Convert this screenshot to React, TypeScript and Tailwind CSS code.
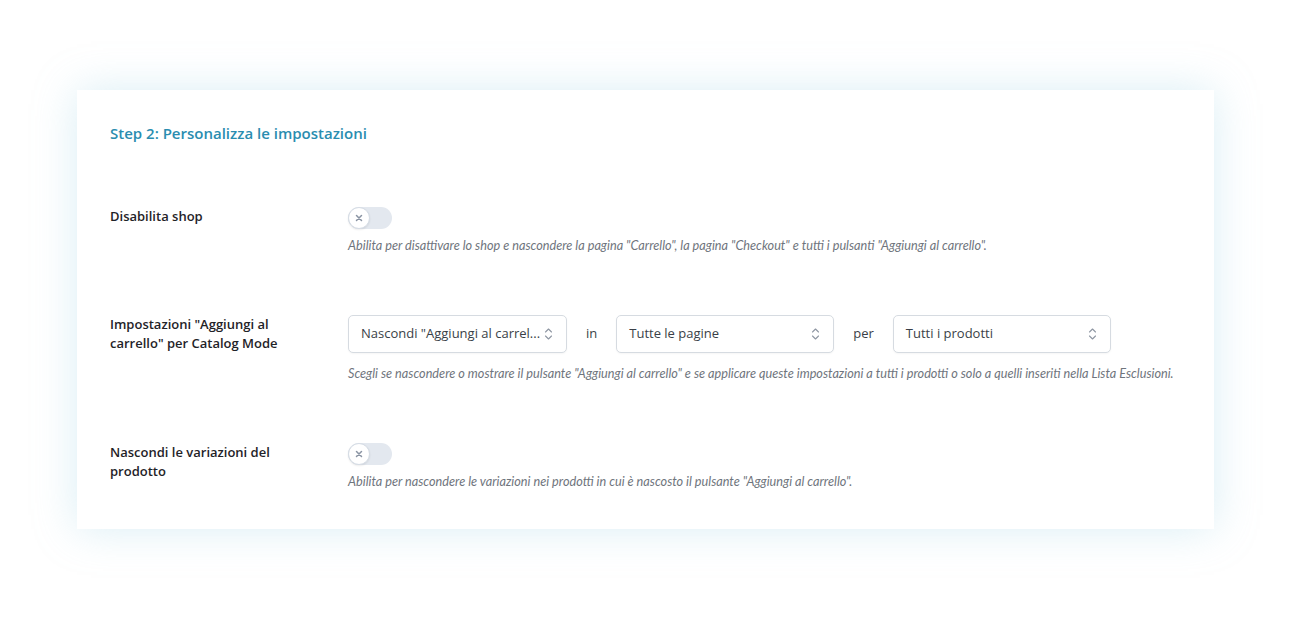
import React from "react";

function Toggle() {
  return (
    <div className="relative h-[22px] w-[44px] rounded-full bg-[#e3e8ef]">
      <div className="absolute left-0 top-0 flex h-[22px] w-[22px] items-center justify-center rounded-full border border-[#d5dce5] bg-white shadow-[0_1px_2px_rgba(0,0,0,0.08)]">
        <svg width="8" height="8" viewBox="0 0 8 8">
          <path d="M1.5 1.5 L6.5 6.5 M6.5 1.5 L1.5 6.5" stroke="#8a94a3" strokeWidth="1.5" strokeLinecap="round" />
        </svg>
      </div>
    </div>
  );
}

function Select({ label, width }: { label: string; width: string }) {
  return (
    <div className={`flex h-[38px] ${width} items-center justify-between rounded-[5px] border border-[#d6dbe1] bg-white pl-[12px] pr-[13px] shadow-[0_1px_2px_rgba(0,0,0,0.04)]`}>
      <span className="whitespace-nowrap text-[13px] text-[#3a3f47]">{label}</span>
      <svg width="9" height="14" viewBox="0 0 9 14" className="shrink-0">
        <path d="M1.5 5 L4.5 2 L7.5 5 M1.5 9 L4.5 12 L7.5 9" fill="none" stroke="#8f97a3" strokeWidth="1.1" strokeLinecap="round" strokeLinejoin="round" />
      </svg>
    </div>
  );
}

function Desc({ children }: { children: React.ReactNode }) {
  return (
    <p className="whitespace-nowrap text-[12.7px] italic leading-[16px] text-[#6f757d]" style={{ fontFamily: "Lato, 'Open Sans', sans-serif" }}>
      {children}
    </p>
  );
}

function Row({ label, children }: { label: React.ReactNode; children: React.ReactNode }) {
  return (
    <div className="flex">
      <div className="w-[238px] shrink-0 pr-[50px] text-[13px] font-semibold leading-[19px] text-[#1f2328]">{label}</div>
      <div className="flex-1">{children}</div>
    </div>
  );
}

export default function App() {
  return (
    <div className="h-[620px] w-[1300px] bg-white pl-[77px] pt-[90px]" style={{ fontFamily: "'Open Sans', 'Noto Sans', sans-serif" }}>
      <div className="relative h-[439px] w-[1137px] bg-white pl-[33px] pr-[20px] pt-[117px] shadow-[0_0_40px_rgba(150,205,225,0.35)]">
        <h2 className="absolute left-[33px] top-[32px] text-[15px] font-semibold text-[#2a8db0]">Step 2: Personalizza le impostazioni</h2>
        <div className="flex flex-col gap-[62px]">
          <Row label={<div className="pt-[-1px]">Disabilita shop</div>}>
            <Toggle />
            <div className="mt-[8px]">
              <Desc>Abilita per disattivare lo shop e nascondere la pagina "Carrello", la pagina "Checkout" e tutti i pulsanti "Aggiungi al carrello".</Desc>
            </div>
          </Row>
          <Row label={<div>Impostazioni "Aggiungi al carrello" per Catalog Mode</div>}>
            <div className="flex items-center gap-[19px] text-[13px] text-[#3a3f47]">
              <Select width="w-[219px]" label={'Nascondi "Aggiungi al carrel...'} />
              <span>in</span>
              <Select width="w-[218px]" label="Tutte le pagine" />
              <span>per</span>
              <Select width="w-[218px]" label="Tutti i prodotti" />
            </div>
            <div className="mt-[12px]">
              <Desc>Scegli se nascondere o mostrare il pulsante "Aggiungi al carrello" e se applicare queste impostazioni a tutti i prodotti o solo a quelli inseriti nella Lista Esclusioni.</Desc>
            </div>
          </Row>
          <Row label={<div>Nascondi le variazioni del prodotto</div>}>
            <Toggle />
            <div className="mt-[8px]">
              <Desc>Abilita per nascondere le variazioni nei prodotti in cui è nascosto il pulsante "Aggiungi al carrello".</Desc>
            </div>
          </Row>
        </div>
      </div>
    </div>
  );
}
